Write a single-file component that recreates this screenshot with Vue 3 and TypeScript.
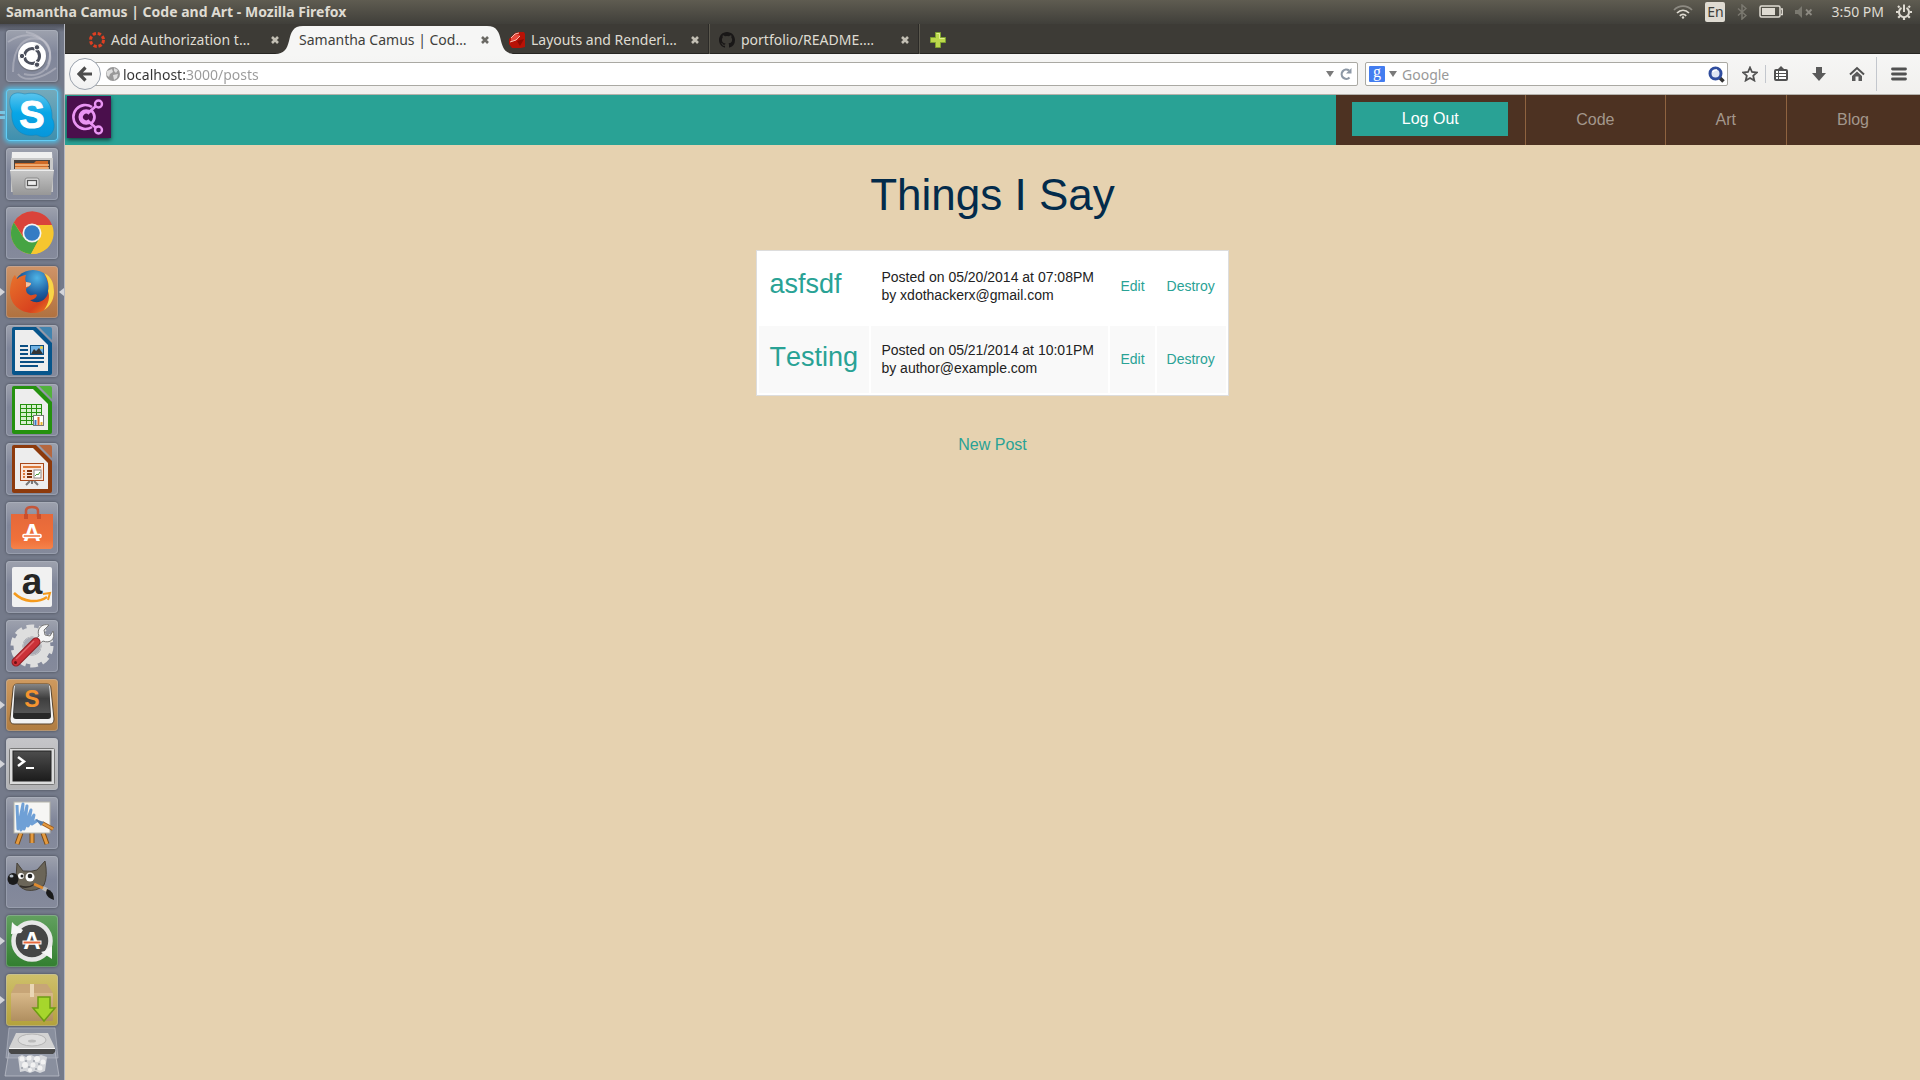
<script setup lang="ts">
import { ref } from 'vue'

interface Tab {
  title: string
  icon: 'rails' | 'ruby' | 'github' | null
}
interface Post {
  title: string
  date: string
  time: string
  author: string
}

const tabs: Tab[] = [
  { title: 'Add Authorization t…', icon: 'rails' },
  { title: 'Samantha Camus | Cod…', icon: null },
  { title: 'Layouts and Renderi…', icon: 'ruby' },
  { title: 'portfolio/README.…', icon: 'github' },
]
const activeTab = ref(1)
const address = ref('localhost:3000/posts')
const query = ref('')

const posts: Post[] = [
  { title: 'asfsdf', date: '05/20/2014', time: '07:08PM', author: 'xdothackerx@gmail.com' },
  { title: 'Testing', date: '05/21/2014', time: '10:01PM', author: 'author@example.com' },
]
const sections = ['Code', 'Art', 'Blog']
</script>

<template>
  <div class="desktop">
    <header class="panel">
      <span class="window-title">Samantha Camus | Code and Art - Mozilla Firefox</span>
      <div class="tray">
        <button aria-label="Network">
          <svg width="20" height="14" viewBox="0 0 20 14" fill="none" stroke="#dfdbd2" stroke-width="1.7">
            <path d="M1 5C6-.2 14-.2 19 5" stroke="#8d8a82" /><path d="M4 8C7.500 4.300 12.500 4.300 16 8" /><path d="M6.800 10.800C8.600 8.900 11.400 8.900 13.200 10.800" /><circle cx="10" cy="12.500" r="1.200" fill="#dfdbd2" stroke="none" />
          </svg>
        </button>
        <button class="lang">En</button>
        <button aria-label="Bluetooth">
          <svg width="10" height="16" viewBox="0 0 10 16" fill="none" stroke="#7b7970" stroke-width="1.500"><path d="M1 4.500L9 11.500L5 15V1L9 4.500L1 11.500" /></svg>
        </button>
        <button aria-label="Battery">
          <svg width="24" height="14" viewBox="0 0 24 14"><rect x="1" y="1" width="20" height="11" rx="1.500" fill="none" stroke="#dfdbd2" stroke-width="1.500" /><rect x="3" y="3" width="13" height="7" fill="#dfdbd2" /><path d="M22 4h1.300v5.500H22" fill="none" stroke="#dfdbd2" stroke-width="1.300" /></svg>
        </button>
        <button aria-label="Sound">
          <svg width="18" height="12" viewBox="0 0 18 12"><path d="M0 4h3L7 0v12L3 8H0z" fill="#7b7970" /><path d="M11 3.500l5.500 5.500M16.500 3.500L11 9" stroke="#8d8a82" stroke-width="1.800" /></svg>
        </button>
        <button class="clock">3:50 PM</button>
        <button aria-label="Session">
          <svg width="16" height="16" viewBox="0 0 16 16" fill="none" stroke="#dfdbd2"><path d="M5.500 3.800A5 5 0 1 0 10.500 3.800" stroke-width="2" /><path d="M8 .5V8" stroke-width="2" /><path d="M3.500 3.500L2 2M12.500 3.500L14 2M2.500 8H0M13.500 8H16M4 12l-1.800 1.800M12 12l1.800 1.800M8 13v3" stroke-width="2.200" /></svg>
        </button>
      </div>
    </header>

    <nav class="launcher" aria-label="Launcher">
      <button class="tile" aria-label="Dash">
        <svg viewBox="0 0 52 52">
          <g fill="none" stroke="#c9cad2" stroke-opacity=".45" stroke-width="2"><path d="M7 42C7 14 20 6 34 9C44 12 46 24 42 34" /><path d="M2 12C22-2 42 8 44 22C46 40 32 48 18 44" /><path d="M20 2C42 6 50 26 40 40" /><path d="M12 44C18 52 34 50 50 38" /></g>
          <circle cx="26" cy="27" r="14.500" fill="#555" fill-opacity=".35" /><circle cx="26" cy="26" r="14" fill="#fff" />
          <circle cx="26" cy="26" r="7.500" fill="none" stroke="#4b4f5c" stroke-width="3" stroke-dasharray="14.200 1.500" stroke-dashoffset="-8" />
          <g fill="#4b4f5c" stroke="#fff"><circle cx="16" cy="26" r="2.700" /><circle cx="31" cy="17.300" r="2.700" /><circle cx="31" cy="34.700" r="2.700" /></g>
        </svg>
      </button>
      <button class="tile skype" aria-label="Skype">
        <span class="mark running double"></span>
        <svg viewBox="0 0 52 52">
          <defs><linearGradient id="sk" x1="0" y1="0" x2="0" y2="1"><stop offset="0" stop-color="#5bc5ee" /><stop offset=".45" stop-color="#08a6e6" /><stop offset="1" stop-color="#0796da" /></linearGradient></defs>
          <path d="M6 6C11 2 17 5 19 5C36 1 47 13 46 29C51 37 47 48 38 48C34 48 32 46 30 46C14 49 4 37 6 22C3 16 3 9 6 6Z" fill="url(#sk)" stroke="#1382b4" stroke-opacity=".5" />
          <text x="26" y="39" text-anchor="middle" font-size="38" font-weight="900" stroke="#fff" stroke-width="1" fill="#fff">S</text>
        </svg>
      </button>
      <button class="tile" aria-label="Files">
        <svg viewBox="0 0 52 52">
          <defs><linearGradient id="fl" x1="0" y1="0" x2="0" y2="1"><stop offset="0" stop-color="#c8c8c8" /><stop offset="1" stop-color="#979797" /></linearGradient></defs>
          <path d="M6 4H46L47 22H5Z" fill="#efefef" /><path d="M5 10H47V44H5Z" fill="#c9c9c9" /><path d="M8 12H44V24H8Z" fill="#4a423c" />
          <path d="M9 15H28L30 13H42V23H9Z" fill="#cf6a27" /><path d="M9 17H43M9 20H43" stroke="#f7c08b" stroke-width="1.500" />
          <path d="M4 22L6 21H46L48 22L45 47H7Z" fill="url(#fl)" /><path d="M4 22.500H48" stroke="#ececec" />
          <rect x="19" y="30" width="14" height="11" rx="2" fill="#ddd" stroke="#888" /><rect x="21.500" y="32.500" width="9" height="5" fill="#eee" stroke="#555" stroke-width="1.200" />
        </svg>
      </button>
      <button class="tile" aria-label="Chrome">
        <svg viewBox="0 0 52 52">
          <circle cx="26" cy="26" r="21" fill="#f6c62f" />
          <path d="M7.800 15.500A21 21 0 0 1 46 18H26L18 31Z" fill="#d9433b" /><path d="M7.800 15.500A21 21 0 0 0 25 47L34 31L17 30Z" fill="#46a443" /><path d="M25 47A21 21 0 0 0 46 18H27L34 30Z" fill="#f6c62f" />
          <circle cx="26" cy="26" r="9.500" fill="#f4f4f4" /><circle cx="26" cy="26" r="7.800" fill="#347cc4" />
        </svg>
      </button>
      <button class="tile firefox" aria-label="Firefox">
        <span class="mark running"></span><span class="mark focused"></span>
        <svg viewBox="0 0 52 52">
          <defs><radialGradient id="ffb" cx=".6" cy=".2" r=".8"><stop offset="0" stop-color="#4fb4e6" /><stop offset=".5" stop-color="#1e5d9f" /><stop offset="1" stop-color="#0c2a5c" /></radialGradient><linearGradient id="ffo" x1="0" y1="0" x2="1" y2="1"><stop offset="0" stop-color="#e8742c" /><stop offset=".7" stop-color="#d8421e" /><stop offset="1" stop-color="#ee8a22" /></linearGradient></defs>
          <circle cx="27" cy="24" r="20" fill="url(#ffb)" />
          <path d="M6 14C7 11 8 10 9 9L11 13C14 10 18 9 20 9C19 12 19 14 20 16L25 17C25 20 21 21 20 23C20 26 21 28 24 29C27 30 29 27 31 29C30 33 26 34 24 34C31 39 40 35 42 27C44 21 41 12 38 8C44 11 48 18 48 26C48 39 39 47 27 47C14 47 4 38 4 26C4 21 5 17 6 14Z" fill="url(#ffo)" />
          <path d="M38 7C46 11 48 18 48 26C48 34 44 40 38 44C43 37 44 31 42 25C44 19 41 11 38 7Z" fill="#f8d548" /><path d="M20 16L25 17C25 20 21 21 20 21Z" fill="#f3c3a0" />
        </svg>
      </button>
      <button class="tile" aria-label="Writer">
        <svg viewBox="0 0 52 52">
          <path d="M8 2H30L46 18V48Q46 50 44 50H8Q6 50 6 48V4Q6 2 8 2Z" fill="#07558b" /><path d="M9 5H27L42 20V46H9Z" fill="#ededed" /><path d="M33 2H44Q46 2 46 4V15Z" fill="#4183ae" />
          <path d="M14 21h8M14 25h8M14 29h8M14 33h24M14 37h24M14 41h18" stroke="#0b4f83" stroke-width="2" /><rect x="24.500" y="20.500" width="13" height="9" fill="#6fb2e4" stroke="#0b4f83" /><path d="M25 29L28 24L30 26L33 23L37 29Z" fill="#333" /><circle cx="35.500" cy="22.500" r="1.500" fill="#f0d048" />
        </svg>
      </button>
      <button class="tile" aria-label="Calc">
        <svg viewBox="0 0 52 52">
          <path d="M8 2H30L46 18V48Q46 50 44 50H8Q6 50 6 48V4Q6 2 8 2Z" fill="#25910f" /><path d="M9 5H27L42 20V46H9Z" fill="#ededed" /><path d="M33 2H44Q46 2 46 4V15Z" fill="#52b23c" />
          <rect x="14.500" y="20.500" width="21" height="20" fill="#d6f0ce" stroke="#25910f" /><path d="M14 24.500h22M14 28.500h22M14 32.500h22M14 36.500h22M20.500 20v21M25.500 20v21M30.500 20v21" stroke="#25910f" fill="none" />
          <rect x="27.500" y="31.500" width="10" height="10" fill="#fff" stroke="#777" /><path d="M29.500 41v-5" stroke="#3a7ac4" stroke-width="2" /><path d="M32.500 41v-8" stroke="#e0662b" stroke-width="2" /><path d="M35.500 41v-3" stroke="#e6b62e" stroke-width="2" />
        </svg>
      </button>
      <button class="tile" aria-label="Impress">
        <svg viewBox="0 0 52 52">
          <path d="M8 2H30L46 18V48Q46 50 44 50H8Q6 50 6 48V4Q6 2 8 2Z" fill="#8d3a0c" /><path d="M9 5H27L42 20V46H9Z" fill="#ededed" /><path d="M33 2H44Q46 2 46 4V15Z" fill="#b5673f" />
          <rect x="14.500" y="20.500" width="23" height="17" fill="#fae6da" stroke="#a8481a" /><path d="M17 24h18" stroke="#dc7a3b" stroke-width="2" /><path d="M17 28h2M17 31h2M17 34h2" stroke="#dc7a3b" stroke-width="2" /><path d="M21 28h5M21 31h5M21 34h5" stroke="#7d330d" stroke-width="2" /><rect x="28" y="27" width="7" height="8" fill="#fff" stroke="#888" /><path d="M29 33l2-2 1 1 2-3" stroke="#4a9c3a" fill="none" /><path d="M24 38L20 42M28 38L32 42M26 38V41" stroke="#777" stroke-width="2" />
        </svg>
      </button>
      <button class="tile" aria-label="Software Center">
        <svg viewBox="0 0 52 52">
          <defs><linearGradient id="sc" x1="0" y1="0" x2="0" y2="1"><stop offset="0" stop-color="#e5683a" /><stop offset=".75" stop-color="#f0713a" /><stop offset="1" stop-color="#f5834b" /></linearGradient></defs>
          <path d="M5 12H47V45L45 47H7L5 45Z" fill="url(#sc)" /><path d="M20 15V9Q20 5 26 5T32 9V15" fill="none" stroke="#c4563a" stroke-width="2.500" /><path d="M18 12h4v5h-4zM31 12h4v5h-4z" fill="#c94e2c" />
          <text x="26" y="39" text-anchor="middle" font-size="24" font-weight="700" fill="#fff">A</text><rect x="17" y="32.500" width="18" height="3" rx="1" fill="#f0713a" stroke="#fff" stroke-width="1.500" />
        </svg>
      </button>
      <button class="tile" aria-label="Amazon">
        <svg viewBox="0 0 52 52">
          <rect x="6" y="6" width="40" height="40" rx="2" fill="#f1f1f1" /><text x="26" y="33" text-anchor="middle" font-size="37" font-weight="700" fill="#252525">a</text>
          <path d="M8 32C18 42 32 42 41 36" fill="none" stroke="#f59a1c" stroke-width="2.500" /><path d="M37 33L44 32L42 39" fill="none" stroke="#f59a1c" stroke-width="2" />
        </svg>
      </button>
      <button class="tile" aria-label="System Settings">
        <svg viewBox="0 0 52 52">
          <circle cx="26" cy="26" r="19" fill="none" stroke="#dedede" stroke-width="5" stroke-dasharray="7.500 4.440" /><circle cx="26" cy="26" r="14" fill="none" stroke="#dedede" stroke-width="9" /><circle cx="26" cy="26" r="9" fill="#a9abb5" stroke="#c6c6c6" />
          <path d="M28 20L33 16C30 9 36 3 43 5L38 10L39 15L44 16L47 11C50 19 44 24 37 21L32 25Z" fill="#f6f6f6" stroke="#777" /><path d="M10 42L30 22" stroke="#8f1d22" stroke-width="9" stroke-linecap="round" /><path d="M10 42L30 22" stroke="#cb3138" stroke-width="7" stroke-linecap="round" /><path d="M10 39L28 21" stroke="#e2666b" stroke-width="1.500" /><circle cx="9.500" cy="42.500" r="1.500" fill="#6a1015" />
        </svg>
      </button>
      <button class="tile sublime" aria-label="Sublime Text">
        <span class="mark running"></span>
        <svg viewBox="0 0 52 52">
          <defs><linearGradient id="sb" x1="0" y1="0" x2="0" y2="1"><stop offset="0" stop-color="#858585" /><stop offset=".5" stop-color="#3e3e3e" /><stop offset="1" stop-color="#555" /></linearGradient></defs>
          <path d="M7 10Q7 5 11 5H41Q45 5 45 10L48 40Q48 45 44 45H8Q4 45 4 40Z" fill="#f2f2f2" stroke="#59452e" /><path d="M9 6H43L45 37Q45 40 42 40H10Q7 40 7 37Z" fill="#292929" /><path d="M9 6Q9 5 10 5H42Q43 5 43 6L44 34H8Z" fill="url(#sb)" />
          <text x="26" y="28" text-anchor="middle" font-size="23" font-weight="700" fill="#f5942f">S</text>
        </svg>
      </button>
      <button class="tile terminal" aria-label="Terminal">
        <span class="mark running"></span>
        <svg viewBox="0 0 52 52">
          <defs><linearGradient id="tm" x1="0" y1="0" x2="0" y2="1"><stop offset="0" stop-color="#4d4d4d" /><stop offset="1" stop-color="#1c1c1c" /></linearGradient></defs>
          <rect x="3.500" y="10.500" width="45" height="36" rx="1" fill="#dcdcdc" stroke="#777" /><rect x="7" y="13" width="38" height="30" fill="url(#tm)" stroke="#222" />
          <path d="M12 19L18 23.500L12 28" fill="none" stroke="#fff" stroke-width="2.500" /><path d="M20 30h8" stroke="#fff" stroke-width="2" />
        </svg>
      </button>
      <button class="tile" aria-label="Paint">
        <svg viewBox="0 0 52 52">
          <path d="M15 36L11 47M26 36V46M37 36L41 47" stroke="#7d4c15" stroke-width="5" /><path d="M15 36L11 47M26 36V46M37 36L41 47" stroke="#e39a40" stroke-width="3" /><rect x="8" y="5" width="36" height="31" fill="#f6f6f4" stroke="#b4b4aa" />
          <path d="M11 8L12 32L17 7L15 33L21 9L18 32L25 13L22 29L28 18L26 27L32 23" fill="none" stroke="#6fa0d6" stroke-width="3" stroke-linejoin="round" /><path d="M36 26L47 32" stroke="#a05c1c" stroke-width="4" /><path d="M36 26L47 32" stroke="#e39a40" stroke-width="2" /><path d="M29 22L38 25L35 29Z" fill="#567fae" />
        </svg>
      </button>
      <button class="tile" aria-label="GIMP">
        <svg viewBox="0 0 52 52">
          <path d="M11 7L17 15Q26 16 31 14L39 5Q42 20 38 29Q31 36 20 34Q11 31 10 22Z" fill="#6b6558" stroke="#47423a" />
          <circle cx="15" cy="20" r="3" fill="#fff" /><circle cx="24" cy="21" r="4.500" fill="#fff" /><circle cx="16" cy="20" r="1.500" fill="#222" /><circle cx="24" cy="20" r="2.300" fill="#222" /><ellipse cx="7" cy="23" rx="5.500" ry="6" fill="#1b1b1b" /><ellipse cx="5.500" cy="20" rx="2" ry="1.500" fill="#b4bdc6" />
          <path d="M14 30Q22 33 29 28" stroke="#332e29" stroke-width="1.500" fill="none" /><path d="M28 28L41 34" stroke="#e08a2d" stroke-width="3" /><path d="M37 32L41 34" stroke="#bbb" stroke-width="4" /><path d="M41 33Q48 35 48 44Q41 42 40 37Z" fill="#1a1a1a" />
        </svg>
      </button>
      <button class="tile updater" aria-label="Software Updater">
        <span class="mark running"></span>
        <svg viewBox="0 0 52 52">
          <circle cx="26" cy="26" r="17" fill="#464646" /><circle cx="26" cy="26" r="18.500" fill="none" stroke="#e7e7e7" stroke-width="4.500" /><path d="M5 19L6 7L9 10L17 15L15 18Z" fill="#f5f5f5" /><path d="M46 31L46 44L43 42L35 37L39 36Z" fill="#f5f5f5" />
          <text x="26" y="34" text-anchor="middle" font-size="24" font-weight="700" fill="#fff">A</text><rect x="17" y="26" width="18" height="3" fill="#e8683c" stroke="#fff" />
        </svg>
      </button>
      <button class="tile installer" aria-label="Package Installer">
        <span class="mark running"></span>
        <svg viewBox="0 0 52 52">
          <defs><linearGradient id="pk" x1="0" y1="0" x2="0" y2="1"><stop offset="0" stop-color="#d8b98a" /><stop offset="1" stop-color="#b08f60" /></linearGradient></defs>
          <path d="M10 10H41L47 19H5Z" fill="#c7a577" /><rect x="5" y="19" width="42" height="28" rx="1" fill="url(#pk)" /><path d="M24 10h4v13h-4z" fill="#ead6b5" />
          <path d="M32 23H44V34H49L38 47L27 34H32Z" fill="#a6d62c" stroke="#6e9c14" stroke-width="1.500" />
        </svg>
      </button>
      <button class="tile folded" aria-label="Disks and Trash">
        <svg viewBox="0 0 52 50">
          <path d="M3 1H49L52 31H0Z" fill="#b3b6c2" fill-opacity=".35" stroke="#b8bbc6" stroke-opacity=".6" /><path d="M3 24H49L53 49H-1Z" fill="#b3b6c2" fill-opacity=".35" stroke="#c2c5cf" stroke-opacity=".7" />
          <path d="M10 6H42L49 21H3Z" fill="#d2d2d2" /><ellipse cx="26" cy="13" rx="14" ry="6" fill="#dedede" stroke="#b4b4b4" /><ellipse cx="26" cy="14" rx="4" ry="1.500" fill="#bbb" /><path d="M3 21H49V25L47 27H5L3 25Z" fill="#484848" /><path d="M3 21.500H49" stroke="#f4f4f4" />
          <path d="M12 30L16 28L20 30L25 28L30 30L35 28L41 30L39 44L34 46L29 44L24 46L19 44L14 45Z" fill="#d4d6da" />
          <g fill="#f2f2f2"><circle cx="16" cy="32" r="2.500" /><circle cx="23" cy="31" r="2.500" /><circle cx="31" cy="32" r="3" /><circle cx="37" cy="35" r="2.500" /><circle cx="19" cy="38" r="3" /><circle cx="27" cy="38" r="2.500" /><circle cx="34" cy="41" r="2.500" /><circle cx="24" cy="43" r="2" /></g>
          <g fill="#9da1a9"><circle cx="20" cy="34" r="1" /><circle cx="28" cy="34" r="1" /><circle cx="33" cy="37" r="1" /><circle cx="23" cy="40" r="1" /><circle cx="16" cy="41" r="1" /><circle cx="30" cy="42" r="1" /></g>
        </svg>
      </button>
    </nav>

    <div class="browser">
      <div class="tabs">
        <div v-for="(tab, i) in tabs" :key="tab.title" class="tab" :class="{ active: i === activeTab }">
          <svg v-if="i === activeTab" class="tab-shape" viewBox="0 0 240 29" preserveAspectRatio="none" aria-hidden="true"><path d="M0 29C9 29 12 24 14 16C16 7 18 1 28 1H212C222 1 224 7 226 16C228 24 231 29 240 29Z" fill="#f6f6f5" /></svg>
          <svg v-if="tab.icon === 'rails'" class="favicon" viewBox="0 0 16 16"><circle cx="8" cy="8" r="6.500" fill="none" stroke="#dd3f22" stroke-width="3" stroke-dasharray="3.300 1.800" /></svg>
          <svg v-else-if="tab.icon === 'ruby'" class="favicon" viewBox="0 0 16 16"><path d="M6 1L11 0H15L16 2V15L12 16H3L0 12V7Z" fill="#b81206" /><path d="M6 2L11 3L8 8L2 10L2 6Z" fill="#e6493c" /><path d="M2 6L6 2L10 1M1 10L7 8L11 4" fill="none" stroke="#f8bdb2" /><path d="M8 9L11 14L15 7Z" fill="#8d0a02" /></svg>
          <svg v-else-if="tab.icon === 'github'" class="favicon" viewBox="0 0 16 16"><path fill="#191717" d="M8 0C3.580 0 0 3.580 0 8c0 3.540 2.290 6.530 5.470 7.590.4.070.55-.17.55-.38v-1.490c-2.230.48-2.690-.94-2.690-.94-.36-.92-.89-1.170-.89-1.170-.73-.5.050-.49.050-.49.81.06 1.230.83 1.230.83.72 1.230 1.880.87 2.340.67.07-.52.28-.87.5-1.070-1.770-.2-3.640-.89-3.640-3.950 0-.87.31-1.590.82-2.150-.08-.2-.36-1.010.08-2.120 0 0 .67-.21 2.200.82a7.600 7.600 0 0 1 4 0c1.530-1.030 2.200-.82 2.200-.82.44 1.110.16 1.920.08 2.120.51.56.82 1.280.82 2.150 0 3.060-1.870 3.740-3.650 3.940.29.25.54.73.54 1.480v2.190c0 .21.15.46.55.38A8 8 0 0 0 16 8c0-4.420-3.580-8-8-8z" /></svg>
          <button class="tab-title" @click="activeTab = i">{{ tab.title }}</button>
          <button class="tab-close" aria-label="Close tab"><svg width="10" height="10" viewBox="0 0 10 10"><path d="M2 2L8 8M8 2L2 8" stroke="currentColor" stroke-width="2.600" /></svg></button>
        </div>
        <button class="new-tab" aria-label="Open a new tab"><svg width="16" height="16" viewBox="0 0 16 16"><path d="M5.500 .5h5v5h5v5h-5v5h-5v-5h-5v-5h5z" fill="#bcd84b" stroke="#7ea130" /><path d="M6.500 1.500h3v5h5" fill="none" stroke="#e2f08e" /></svg></button>
      </div>

      <div class="toolbar">
        <button class="back" aria-label="Back"><svg width="16" height="16" viewBox="0 0 16 16"><path d="M8.500 1.500L2 8l6.500 6.500M2.500 8H15" fill="none" stroke="#4c4c4c" stroke-width="3.200" /></svg></button>
        <div class="field url">
          <svg width="16" height="16" viewBox="0 0 16 16"><circle cx="8" cy="8" r="7" fill="#999" /><path d="M2 5L7 3L8 6L5 8L4 11L1.500 9ZM9 2L13 4L11 7L9 5ZM8 9L13 8L12 12L9 14Z" fill="#dedede" /></svg>
          <input v-model="address" aria-label="Address" class="address" />
          <button aria-label="Show history"><svg width="8" height="6" viewBox="0 0 8 6"><path d="M0 0H8L4 6Z" fill="#7a7a7a" /></svg></button>
          <button aria-label="Reload" class="reload"><svg width="12" height="12" viewBox="0 0 12 12"><path d="M9.500 9.500A4.600 4.600 0 1 1 9 2.500" fill="none" stroke="#8d98a5" stroke-width="2.200" /><path d="M11.500 0V5.500H6Z" fill="#8d98a5" /></svg></button>
        </div>
        <div class="field search">
          <svg width="16" height="16" viewBox="0 0 16 16"><rect width="16" height="16" rx="1" fill="#437df0" /><text x="8" y="11" text-anchor="middle" font-size="16" class="serif" fill="#fff">g</text></svg>
          <button class="engine" aria-label="Search engine"><svg width="8" height="6" viewBox="0 0 8 6"><path d="M0 0H8L4 6Z" fill="#7a7a7a" /></svg></button>
          <input v-model="query" aria-label="Search" placeholder="Google" />
          <button aria-label="Search"><svg width="17" height="17" viewBox="0 0 17 17"><path d="M11 11L15.500 15.500" stroke="#333" stroke-width="3.500" /><circle cx="7.500" cy="7.500" r="5.500" fill="#dfe6f4" stroke="#2f4d9e" stroke-width="3" /><path d="M4.500 6Q6 3.500 9 4" fill="none" stroke="#fff" stroke-width="1.500" /></svg></button>
        </div>
        <div class="tools">
          <button class="star" aria-label="Bookmark this page"><svg width="16" height="16" viewBox="0 0 16 16"><path d="M8 1.500L10 6L14.800 6.500L11.200 9.700L12.300 14.500L8 12L3.700 14.500L4.800 9.700L1.200 6.500L6 6Z" fill="none" stroke="#515151" stroke-width="1.800" /></svg></button>
          <button class="clip" aria-label="Bookmarks"><svg width="14" height="16" viewBox="0 0 14 16"><rect x="1" y="4" width="12" height="10" rx="1" fill="#fff" stroke="#515151" stroke-width="2" /><path d="M4 3L7 0L10 3Z" fill="#515151" /><path d="M2 7.500h10M2 10.500h10M4.500 5v9" stroke="#515151" /></svg></button>
          <button class="down" aria-label="Downloads"><svg width="14" height="14" viewBox="0 0 14 14"><path d="M4 0H10V6H14L7 14L0 6H4Z" fill="#5a5a5a" /></svg></button>
          <button class="home" aria-label="Home"><svg width="16" height="16" viewBox="0 0 16 16"><path d="M1 8.500L8 2L15 8.500" fill="none" stroke="#515151" stroke-width="2" /><path d="M3 10L8 5.500L13 10V15H9.500V10.500H6.500V15H3Z" fill="#5a5a5a" /></svg></button>
          <button class="menu" aria-label="Open menu"><svg width="16" height="14" viewBox="0 0 16 14"><path d="M1.500 2h13M1.500 7h13M1.500 12h13" stroke="#515151" stroke-width="2.800" stroke-linecap="round" /></svg></button>
        </div>
      </div>

      <div class="page">
        <nav class="site-nav">
          <a href="#" class="logo" aria-label="Home page">
            <svg width="44" height="42" viewBox="0 0 44 42"><rect width="44" height="42" fill="#4a0f4c" /><g fill="none" stroke="#e995f3"><path d="M25 11A12 12 0 1 0 25 31" stroke-width="2.600" /><path d="M23 17A5.500 5.500 0 1 0 23 25" stroke-width="4.500" /><path d="M22 16L28.500 10.500M22 26L28.500 31.500M24 14Q31 21 24 28" stroke-width="2.600" /><circle cx="31.500" cy="8" r="3.500" stroke-width="2.400" /><circle cx="31.500" cy="34" r="3.500" stroke-width="2.400" /></g></svg>
          </a>
          <ul>
            <li class="session"><button>Log Out</button></li>
            <li v-for="s in sections" :key="s"><a href="#">{{ s }}</a></li>
          </ul>
        </nav>
        <main>
          <h1>Things I Say</h1>
          <table>
            <tbody>
              <tr v-for="post in posts" :key="post.title">
                <td class="post-title"><a href="#">{{ post.title }}</a></td>
                <td class="meta">Posted on {{ post.date }} at {{ post.time }}<br />by {{ post.author }}</td>
                <td class="action edit"><a href="#">Edit</a></td>
                <td class="action destroy"><a href="#">Destroy</a></td>
              </tr>
            </tbody>
          </table>
          <a href="#" class="new-post">New Post</a>
        </main>
      </div>
    </div>
  </div>
</template>

<style>
body {
  margin: 0;
  background: #e6d2b0;
}
</style>

<style scoped>
* {
  box-sizing: border-box;
}
.desktop {
  display: grid;
  grid-template: 24px 1fr / 65px 1fr;
  min-height: 100vh;
  font: 14px/20px "Noto Sans", "Open Sans", sans-serif;
}
svg {
  display: block;
  flex: none;
}
button {
  padding: 0;
  border: 0;
  background: none;
  font: inherit;
  color: inherit;
  display: flex;
  align-items: center;
  justify-content: center;
}
a {
  color: #29a295;
  text-decoration: none;
}

/* top panel */
.panel {
  grid-column: 1 / -1;
  display: flex;
  align-items: center;
  justify-content: space-between;
  padding: 0 8px 0 6px;
  background: linear-gradient(#5f5c51, #403f3a);
  color: #dfdbd2;
}
.window-title {
  font-weight: 700;
}
.tray {
  display: flex;
  align-items: center;
  gap: 12px;
}
.lang {
  width: 20px;
  height: 20px;
  border-radius: 2px;
  background: #dfdbd2;
  color: #403f3a;
}
.clock {
  margin-left: 6px;
}

/* launcher */
.launcher {
  display: flex;
  flex-direction: column;
  align-items: center;
  gap: 7px;
  padding: 6px 1px 4px 0;
  background: linear-gradient(#4b4e58, #747a8a 8px);
  border-right: 1px solid #b4b7c0;
}
.tile {
  position: relative;
  width: 52px;
  height: 52px;
  border-radius: 4px;
  background: linear-gradient(#9ea2ae, #80869a 45%, #858a9b);
  box-shadow: inset 0 0 0 1px rgb(190 194 205 / 35%), 0 0 2px 1px rgb(70 74 86 / 50%);
  font-family: "Liberation Sans", Arial, sans-serif;
}
.tile svg {
  width: 100%;
  height: 100%;
}
.skype {
  background: linear-gradient(#76aabb, #3e8fae);
  box-shadow: inset 0 0 0 1px #63cdf5, 0 0 4px 2px #4fb9df;
}
.firefox {
  background: linear-gradient(#cf9468, #b0713f);
}
.sublime {
  background: linear-gradient(#cf9a5f, #b07c40);
}
.terminal {
  background: linear-gradient(#c5c5c8, #b2b2b4);
}
.updater {
  background: linear-gradient(#62a05f, #327f30);
}
.installer {
  background: linear-gradient(#cfc06b, #b4a23c);
}
.folded {
  height: 50px;
  margin-top: -6px;
  background: none;
  box-shadow: none;
}
.folded svg {
  overflow: visible;
}
.mark {
  position: absolute;
  top: 22px;
  border: 4px solid transparent;
}
.mark.running {
  left: -6px;
  border-left: 5px solid #d3d4d9;
  border-right: 0;
}
.mark.focused {
  right: -6px;
  border-right: 5px solid #d3d4d9;
  border-left: 0;
}
.mark.double {
  width: 5px;
  height: 8px;
  border: 0;
  border-top: 3px solid #79c6e4;
  border-bottom: 3px solid #79c6e4;
}

/* tab strip */
.browser {
  display: flex;
  flex-direction: column;
  min-width: 0;
}
.tabs {
  display: flex;
  height: 30px;
  padding-left: 15px;
  background: #3d3b36;
  border-bottom: 1px solid #262522;
  color: #dfdbd2;
}
.tab {
  position: relative;
  display: flex;
  align-items: center;
  width: 210px;
  height: 30px;
  padding: 2px 10px 0 9px;
  gap: 6px;
}
.tab:nth-child(n + 3) {
  box-shadow: inset -1px 0 #5c594f, inset -2px 0 #2b2a27;
}
.tab-shape {
  position: absolute;
  left: -15px;
  top: 1px;
  width: calc(100% + 30px);
  height: 29px;
}
.tab.active {
  color: #403f3c;
}
.favicon {
  position: relative;
  z-index: 1;
  width: 16px;
  height: 16px;
}
.tab-title {
  position: relative;
  flex: 1;
  justify-content: flex-start;
  min-width: 0;
  white-space: nowrap;
}
.tab-close {
  position: relative;
  color: #c3bfb4;
}
.active .tab-close {
  color: #6a6964;
}
.new-tab {
  margin: 2px 0 0 10px;
}

/* navigation toolbar */
.toolbar {
  display: flex;
  align-items: center;
  height: 41px;
  padding: 0 13px 0 4px;
  background: linear-gradient(#f6f6f5, #f1f0ee);
  border-bottom: 1px solid #b4b2ac;
}
.back {
  z-index: 1;
  width: 32px;
  height: 32px;
  border: 1px solid #9aa2ad;
  border-radius: 50%;
  background: linear-gradient(#fff, #f0f0f0);
}
.field {
  display: flex;
  align-items: center;
  height: 24px;
  border: 1px solid #aaa9a3;
  border-radius: 2px;
  background: #fff;
}
.field input {
  flex: 1;
  min-width: 0;
  height: 22px;
  padding: 0;
  border: 0;
  outline: 0;
  background: none;
  font: inherit;
  color: #333;
}
.field input::placeholder {
  color: #999;
}
.url {
  flex: 1;
  min-width: 0;
  margin-left: -8px;
  padding: 0 5px 0 11px;
  gap: 2px;
}
.field .address {
  background: linear-gradient(to right, #333 63px, #999 63px);
  background-clip: text;
  -webkit-background-clip: text;
  color: transparent;
}
.reload {
  margin-left: 4px;
}
.search {
  width: 363px;
  margin-left: 7px;
  padding: 0 2px 0 3px;
}
.engine {
  margin: 0 5px 0 4px;
}
.serif {
  font-family: "Liberation Serif", serif;
}
.tools {
  display: flex;
  align-items: center;
}
.star {
  margin-left: 14px;
}
.clip {
  height: 18px;
  margin-left: 7px;
  padding-left: 8px;
  border-left: 1px solid #c3c7cd;
}
.down {
  margin-left: 24px;
}
.home {
  margin-left: 23px;
}
.menu {
  height: 34px;
  margin-left: 11px;
  padding-left: 14px;
  border-left: 1px solid #c3c7cd;
}

/* site */
.page {
  flex: 1;
  background: #e6d2b0;
  font: 16px/24px "Liberation Sans", Arial, sans-serif;
}
.site-nav {
  display: flex;
  justify-content: space-between;
  height: 50px;
  background: #29a295;
}
.logo {
  height: 42px;
  margin: 1px 0 0 2px;
  box-shadow: 0 2px 4px rgb(0 0 0 / 60%);
}
.site-nav ul {
  display: flex;
  margin: 0;
  padding: 0;
  list-style: none;
  background: #4d3222;
}
.site-nav li {
  display: flex;
  align-items: center;
  padding: 0 50px;
  border-left: 1px solid #8f6340;
}
.site-nav li:last-child {
  padding-right: 51px;
}
.site-nav li a {
  color: #a3978c;
}
.site-nav .session {
  padding: 0 17px 2px 16px;
  border: 0;
}
.session button {
  width: 156px;
  height: 34px;
  background: #29a295;
  color: #fff;
}
main {
  display: flex;
  flex-direction: column;
  align-items: center;
}
h1 {
  margin: 19px 0 24px;
  font-size: 44px;
  line-height: 62px;
  font-weight: 400;
  color: #032b4b;
}
table {
  border: 1px solid #ddd;
  border-spacing: 2px;
  background: #fff;
  font-kerning: none;
}
tr {
  height: 67px;
}
tr:first-child {
  height: 71px;
}
tr:nth-child(even) {
  background: #f9f9f9;
}
td {
  padding: 15px 10px 0;
  vertical-align: top;
  font-size: 14px;
  line-height: 18px;
  color: #222;
  white-space: nowrap;
}
.post-title {
  width: 110px;
  padding-top: 13px;
  font-size: 27px;
  line-height: 36px;
}
.meta {
  width: 237px;
}
.action {
  padding-top: 24px;
}
.edit {
  width: 44px;
}
.destroy {
  width: 69px;
}
.new-post {
  margin-top: 37px;
}
</style>
